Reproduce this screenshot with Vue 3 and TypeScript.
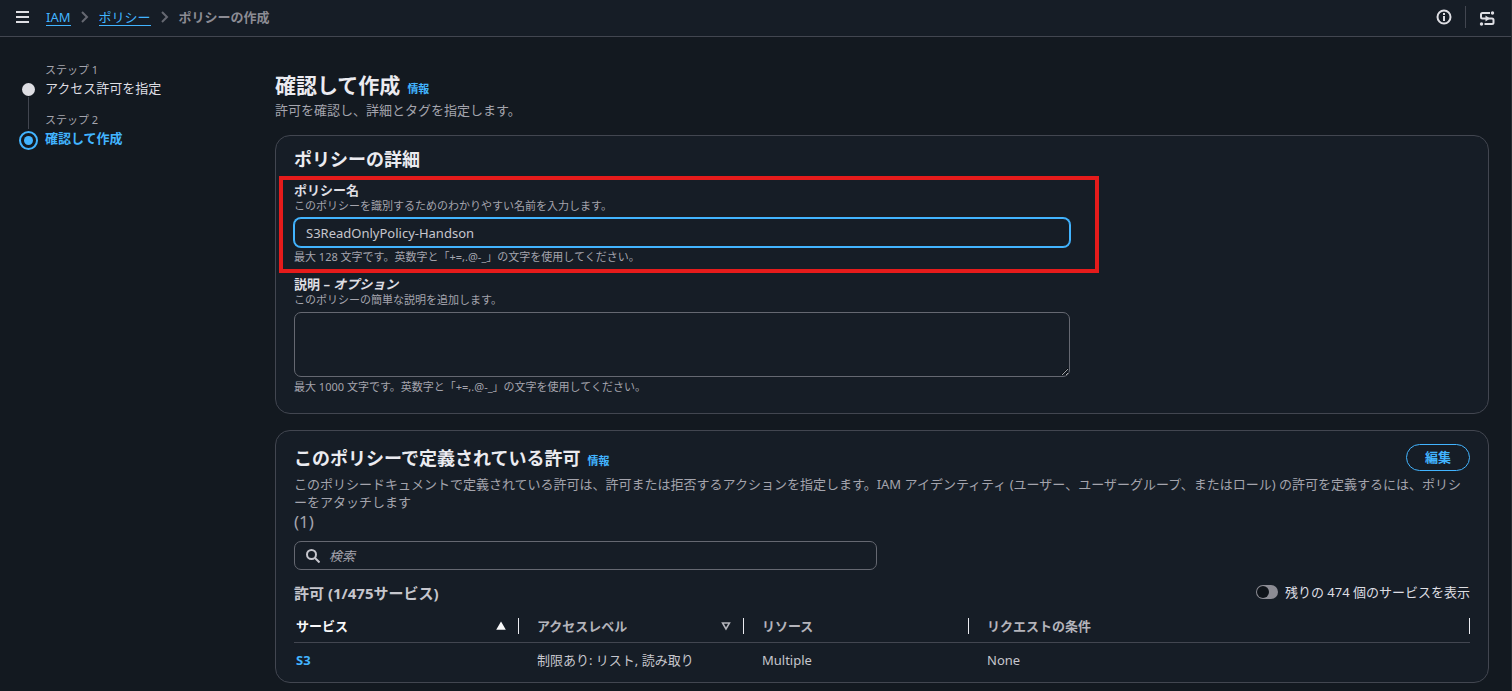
<script setup lang="ts">
import { ref } from 'vue'

interface PermissionRow {
  service: string
  access: string
  resource: string
  condition: string
}

const policyName = ref('S3ReadOnlyPolicy-Handson')
const description = ref('')
const query = ref('')
const showRemaining = ref(false)

const rows: PermissionRow[] = [
  { service: 'S3', access: '制限あり: リスト, 読み取り', resource: 'Multiple', condition: 'None' },
]
</script>

<template>
  <div class="page">
    <header class="topbar">
      <button class="icon-button" type="button" aria-label="メニュー">
        <svg width="14" height="14" viewBox="0 0 14 14"><path d="M0 2h13M0 7h13M0 12h13" /></svg>
      </button>
      <nav class="crumbs" aria-label="パンくずリスト">
        <a href="#iam">IAM</a>
        <svg width="8" height="14" viewBox="0 0 8 14"><path d="M1 2l5 5-5 5" /></svg>
        <a href="#policies">ポリシー</a>
        <svg width="8" height="14" viewBox="0 0 8 14"><path d="M1 2l5 5-5 5" /></svg>
        <span>ポリシーの作成</span>
      </nav>
      <div class="tools">
        <button class="icon-button" type="button" aria-label="情報パネル">
          <svg width="16" height="16" viewBox="0 0 16 16"><circle cx="8" cy="8" r="6.5" /><path d="M8 7v5M8 4v2" /></svg>
        </button>
        <span class="divider"></span>
        <button class="icon-button" type="button" aria-label="ツール">
          <svg width="16" height="18" viewBox="0 0 16 18">
            <path d="M11 5H3.500Q2 5 2 6.500V9q0 1.500 1.500 1.500H13q1.500 0 1.500 1.500v2.500q0 1.500-1.500 1.500H5.500" />
            <circle class="dot" cx="13.500" cy="5" r="1.700" />
            <circle class="dot" cx="2.500" cy="16" r="1.700" />
            <path class="dot" d="M6.500 7.500l4.500 3-4.500 3z" />
          </svg>
        </button>
      </div>
    </header>

    <div class="body">
      <ol class="steps" aria-label="ステップ">
        <li>
          <span class="marker"></span>
          <div><small>ステップ 1</small><p>アクセス許可を指定</p></div>
        </li>
        <li class="current" aria-current="step">
          <span class="marker"></span>
          <div><small>ステップ 2</small><p>確認して作成</p></div>
        </li>
      </ol>

      <main>
        <div class="title">
          <h1>確認して作成</h1>
          <a class="info" href="#info">情報</a>
        </div>
        <p class="lead">許可を確認し、詳細とタグを指定します。</p>

        <section class="card details">
          <h2>ポリシーの詳細</h2>
          <div class="field highlighted">
            <label for="policy-name">ポリシー名</label>
            <p class="hint">このポリシーを識別するためのわかりやすい名前を入力します。</p>
            <input id="policy-name" v-model="policyName" class="control active" type="text" />
            <p class="hint">最大 128 文字です。英数字と「+=,.@-_」の文字を使用してください。</p>
          </div>
          <div class="field">
            <label for="policy-description">説明 – <i>オプション</i></label>
            <p class="hint">このポリシーの簡単な説明を追加します。</p>
            <textarea id="policy-description" v-model="description" class="control"></textarea>
            <p class="hint">最大 1000 文字です。英数字と「+=,.@-_」の文字を使用してください。</p>
          </div>
        </section>

        <section class="card permissions">
          <div class="card-head">
            <div class="title">
              <h2>このポリシーで定義されている許可</h2>
              <a class="info" href="#permissions-info">情報</a>
            </div>
            <button class="edit" type="button">編集</button>
          </div>
          <p class="lead">このポリシードキュメントで定義されている許可は、許可または拒否するアクションを指定します。IAM アイデンティティ (ユーザー、ユーザーグループ、またはロール) の許可を定義するには、ポリシーをアタッチします</p>
          <p class="count">(1)</p>
          <div class="search control">
            <svg width="14" height="14" viewBox="0 0 14 14"><circle cx="5.5" cy="5.5" r="4.5" /><path d="M9 9l4.5 4.5" /></svg>
            <input v-model="query" type="search" placeholder="検索" aria-label="検索" />
          </div>
          <div class="summary">
            <h3>許可 (1/475サービス)</h3>
            <label class="switch">
              <input v-model="showRemaining" type="checkbox" role="switch" />
              <span>残りの 474 個のサービスを表示</span>
            </label>
          </div>
          <table>
            <thead>
              <tr>
                <th class="sorted" scope="col" aria-sort="ascending">
                  <div>サービス<svg width="10" height="10" viewBox="0 0 10 10"><path d="M5 2l3.500 6h-7z" /></svg></div>
                </th>
                <th scope="col">
                  <div>アクセスレベル<svg width="10" height="10" viewBox="0 0 10 10"><path d="M5 8L1.500 2h7z" /></svg></div>
                </th>
                <th scope="col"><div>リソース</div></th>
                <th scope="col"><div>リクエストの条件</div></th>
              </tr>
            </thead>
            <tbody>
              <tr v-for="row in rows" :key="row.service">
                <td><a href="#s3">{{ row.service }}</a></td>
                <td>{{ row.access }}</td>
                <td>{{ row.resource }}</td>
                <td>{{ row.condition }}</td>
              </tr>
            </tbody>
          </table>
        </section>
      </main>
    </div>
  </div>
</template>

<style>
body {
  margin: 0;
  background: #131920;
}
</style>

<style scoped>
.page {
  color: #c6c6cd;
  background: #131920;
  border-right: 1px solid #292d33;
  font: 13px/18px "Noto Sans", "Noto Sans CJK JP", sans-serif;
}

.page * {
  box-sizing: border-box;
}

h1, h2, h3, p, ol {
  margin: 0;
  padding: 0;
}

button, input, textarea {
  font: inherit;
  color: inherit;
}

svg {
  display: block;
  flex: none;
  fill: none;
  stroke: currentColor;
  stroke-width: 2;
}

a {
  color: #42b4ff;
  text-decoration: none;
}

.topbar {
  display: flex;
  align-items: center;
  height: 37px;
  padding: 0 16px 2px;
  background: #161d26;
  border-bottom: 1px solid #424650;
}

.icon-button {
  padding: 0;
  border: 0;
  background: none;
  color: #dedee3;
}

.crumbs {
  display: flex;
  align-items: center;
  gap: 10px;
  margin-left: 16px;
  color: #8c8c94;
  font-weight: 600;
}

.crumbs a {
  border-bottom: 1px solid #42b4ff;
  font-weight: 400;
  line-height: 16px;
}

.crumbs svg {
  color: #656871;
}

.tools {
  display: flex;
  align-items: center;
  gap: 13px;
  margin-left: auto;
}

.divider {
  width: 1px;
  height: 22px;
  background: #424650;
}

.dot {
  fill: currentColor;
  stroke: none;
}

.body {
  display: grid;
  grid-template-columns: 256px minmax(0, 1fr);
  padding: 24px 22px 7px 19px;
}

.steps {
  list-style: none;
}

.steps li {
  display: flex;
  gap: 7px;
  position: relative;
  height: 50px;
}

.steps small {
  display: block;
  color: #a4a4ad;
  font-size: 11px;
}

.steps p {
  color: #dedee3;
}

.steps .current p {
  color: #42b4ff;
  font-weight: 700;
}

.marker {
  flex: none;
  width: 13px;
  height: 13px;
  margin: 22px 3px 0;
  border-radius: 50%;
  background: #dedee3;
}

.current .marker {
  width: 19px;
  height: 19px;
  margin: 20px 0 0;
  border: 2px solid #42b4ff;
  padding: 3px;
  background: #42b4ff content-box;
}

.steps li:first-child::after {
  content: "";
  position: absolute;
  left: 9px;
  top: 36px;
  width: 1px;
  height: 32px;
  background: #424650;
}

.title {
  display: flex;
  align-items: baseline;
  gap: 7px;
}

h1 {
  color: #ebebf0;
  font-size: 21px;
  line-height: 32px;
}

h2 {
  color: #ebebf0;
  font-size: 18px;
  line-height: 24px;
}

.info {
  font-size: 11px;
  font-weight: 700;
}

main > .title {
  margin-top: 8px;
}

.lead {
  color: #a4a4ad;
}

.card {
  padding: 11px 18px 19px;
  background: #161d26;
  border: 1px solid #424650;
  border-radius: 15px;
}

.details {
  margin: 16px 0;
}

.permissions {
  padding: 13px 18px;
}

.permissions .lead {
  margin-top: 4px;
}

.field {
  width: 66%;
  margin-top: 2px;
}

.highlighted {
  box-sizing: content-box !important;
  margin: 5px -15px 0;
  padding: 1px 25px 5px 11px;
  border: 4px solid #e51b1b;
}

.field label {
  display: block;
  color: #dedee3;
  font-weight: 700;
}

.hint {
  color: #a4a4ad;
  font-size: 11px;
  line-height: 14px;
}

.control {
  display: block;
  width: 100%;
  border: 1px solid #656871;
  border-radius: 7px;
  background: #161d26;
}

input.control {
  height: 29px;
  margin: 5px 0 3px;
  padding: 0 11px;
}

.active {
  border-color: #42b4ff;
  outline: 0;
  box-shadow: 0 0 0 1px #42b4ff;
}

textarea.control {
  height: 65px;
  margin: 5px 0 3px;
}

.card-head {
  display: flex;
  justify-content: space-between;
  align-items: center;
}

.edit {
  padding: 3px 18px 4px;
  border: 1px solid #42b4ff;
  border-radius: 18px;
  background: none;
  color: #42b4ff;
  font-weight: 700;
}

.count {
  color: #a4a4ad;
  font-size: 17px;
  line-height: 22px;
}

.search {
  display: flex;
  align-items: center;
  gap: 9px;
  width: 583px;
  max-width: 100%;
  height: 29px;
  margin-top: 8px;
  padding: 0 11px;
}

.search input {
  flex: 1;
  padding: 0;
  border: 0;
  outline: 0;
  background: none;
}

.search input::placeholder {
  color: #a4a4ad;
  font-style: italic;
}

.summary {
  display: flex;
  justify-content: space-between;
  margin-top: 13px;
}

.summary h3 {
  font-size: 15px;
  line-height: 20px;
}

.switch {
  display: flex;
  align-items: center;
  gap: 7px;
  height: 18px;
  color: #dedee3;
}

.switch input {
  appearance: none;
  width: 22px;
  height: 14px;
  margin: 0;
  padding: 1px;
  border-radius: 7px;
  background: #8c8c94;
}

.switch input::before {
  content: "";
  display: block;
  width: 12px;
  height: 12px;
  border-radius: 50%;
  background: #0f141a;
}

.switch input:checked::before {
  margin-left: auto;
}

table {
  width: 100%;
  margin-top: 7px;
  border-collapse: collapse;
  table-layout: fixed;
}

th {
  width: 225px;
  padding: 8px 0;
  border-bottom: 1px solid #424650;
  color: #b4b4bb;
  text-align: left;
}

th:last-child {
  width: auto;
}

th div {
  display: flex;
  align-items: center;
  justify-content: space-between;
  padding: 0 12px 0 18px;
  border-right: 1px solid #ebebf0;
  line-height: 16px;
}

th svg {
  stroke-width: 1.5;
}

th:first-child div, td:first-child {
  padding-left: 2px;
}

.sorted {
  color: #f9f9fa;
}

.sorted svg {
  fill: currentColor;
}

td {
  padding: 8px 18px 0;
}

td a {
  font-weight: 700;
}
</style>
